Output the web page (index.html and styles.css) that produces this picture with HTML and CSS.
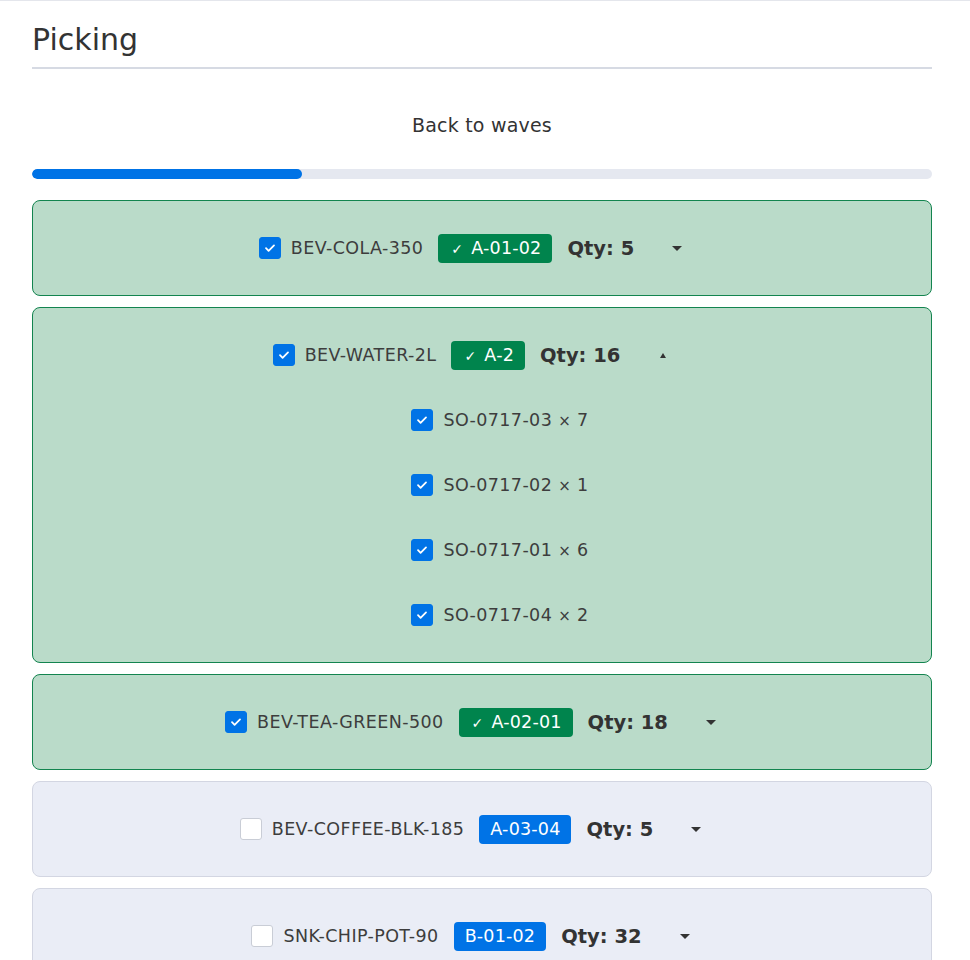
FILE: index.html
```html
<!DOCTYPE html>
<html lang="en">
<head>
  <meta charset="UTF-8">
  <meta name="viewport" content="width=device-width, initial-scale=1.0">
  <title>Picking</title>
  <link rel="stylesheet" href="styles.css">
</head>
<body>
  <div class="page">
    <h1 class="title">Picking</h1>

    <div class="back-link">
      <a href="#">Back to waves</a>
    </div>

    <div class="progress">
      <div class="progress-fill" style="width: 30%"></div>
    </div>

    <div class="pick-list">
      <div class="pick-card done">
        <div class="pick-row">
          <span class="check on"><svg viewBox="0 0 16 16"><path d="M4 8.2l2.6 2.6L12 5.4"/></svg></span>
          <span class="sku">BEV-COLA-350</span>
          <span class="loc ok"><span class="tick">✓</span>A-01-02</span>
          <span class="qty">Qty: 5</span>
          <span class="toggle"><span class="caret down"></span></span>
        </div>
      </div>

      <div class="pick-card done">
        <div class="pick-row">
          <span class="check on"><svg viewBox="0 0 16 16"><path d="M4 8.2l2.6 2.6L12 5.4"/></svg></span>
          <span class="sku">BEV-WATER-2L</span>
          <span class="loc ok"><span class="tick">✓</span>A-2</span>
          <span class="qty">Qty: 16</span>
          <span class="toggle"><span class="caret up"></span></span>
        </div>
        <div class="orders">
          <div class="order-row">
            <span class="check on"><svg viewBox="0 0 16 16"><path d="M4 8.2l2.6 2.6L12 5.4"/></svg></span>
            <span class="sku">SO-0717-03 <span class="times">×</span> 7</span>
          </div>
          <div class="order-row">
            <span class="check on"><svg viewBox="0 0 16 16"><path d="M4 8.2l2.6 2.6L12 5.4"/></svg></span>
            <span class="sku">SO-0717-02 <span class="times">×</span> 1</span>
          </div>
          <div class="order-row">
            <span class="check on"><svg viewBox="0 0 16 16"><path d="M4 8.2l2.6 2.6L12 5.4"/></svg></span>
            <span class="sku">SO-0717-01 <span class="times">×</span> 6</span>
          </div>
          <div class="order-row">
            <span class="check on"><svg viewBox="0 0 16 16"><path d="M4 8.2l2.6 2.6L12 5.4"/></svg></span>
            <span class="sku">SO-0717-04 <span class="times">×</span> 2</span>
          </div>
        </div>
      </div>

      <div class="pick-card done">
        <div class="pick-row">
          <span class="check on"><svg viewBox="0 0 16 16"><path d="M4 8.2l2.6 2.6L12 5.4"/></svg></span>
          <span class="sku">BEV-TEA-GREEN-500</span>
          <span class="loc ok"><span class="tick">✓</span>A-02-01</span>
          <span class="qty">Qty: 18</span>
          <span class="toggle"><span class="caret down"></span></span>
        </div>
      </div>

      <div class="pick-card">
        <div class="pick-row">
          <span class="check"></span>
          <span class="sku">BEV-COFFEE-BLK-185</span>
          <span class="loc">A-03-04</span>
          <span class="qty">Qty: 5</span>
          <span class="toggle"><span class="caret down"></span></span>
        </div>
      </div>

      <div class="pick-card">
        <div class="pick-row">
          <span class="check"></span>
          <span class="sku">SNK-CHIP-POT-90</span>
          <span class="loc">B-01-02</span>
          <span class="qty">Qty: 32</span>
          <span class="toggle"><span class="caret down"></span></span>
        </div>
      </div>
    </div>
  </div>
</body>
</html>
```

FILE: styles.css
```css
body {
  margin: 0;
  font-family: "DejaVu Sans", sans-serif;
  color: #333;
  background: #fff;
  border-top: 1px solid #e4e6ec;
}

.page {
  width: 900px;
  margin-left: 32px;
}

.title {
  margin: 0;
  padding-top: 20px;
  padding-bottom: 8px;
  font-size: 30px;
  font-weight: 400;
  line-height: 38px;
  color: #333;
  border-bottom: 2px solid #d6dae3;
}

.back-link {
  text-align: center;
  padding-top: 41px;
  height: 30px;
  line-height: 30px;
}

.back-link a {
  color: #333;
  text-decoration: none;
  font-size: 19px;
  letter-spacing: 0.2px;
}

.progress {
  margin-top: 29px;
  height: 10px;
  border-radius: 5px;
  background: #e5e8f0;
  overflow: hidden;
}

.progress-fill {
  height: 100%;
  background: #0073e6;
  border-radius: 5px;
}

.pick-list {
  margin-top: 21px;
  display: flex;
  flex-direction: column;
  gap: 11px;
}

.pick-card {
  background: #eaedf6;
  border: 1px solid #d3d6e2;
  border-radius: 8px;
  padding: 31px 0;
}

.pick-card.done {
  background: #badbc9;
  border-color: #13844f;
}

.pick-row,
.order-row {
  display: flex;
  align-items: center;
  justify-content: center;
  height: 32px;
}

.check {
  width: 20px;
  height: 20px;
  border: 1px solid #c9cdd6;
  border-radius: 3px;
  background: #fff;
  margin-right: 10px;
  display: flex;
  align-items: center;
  justify-content: center;
}

.check.on {
  background: #0073e6;
  border-color: #0073e6;
}

.check svg {
  width: 16px;
  height: 16px;
  fill: none;
  stroke: #fff;
  stroke-width: 1.8;
  stroke-linecap: round;
  stroke-linejoin: round;
}

.sku {
  font-size: 17.5px;
  letter-spacing: 0.4px;
  color: #3d3d3d;
}

.times {
  font-size: 15px;
}

.loc {
  margin-left: 15px;
  background: #0073e6;
  color: #fff;
  font-size: 17.5px;
  letter-spacing: 0.2px;
  height: 29px;
  line-height: 29px;
  padding: 0 11px;
  border-radius: 4px;
}

.loc.ok {
  background: #00844d;
}

.tick {
  font-size: 14px;
  margin: 0 8px 0 2px;
}

.qty {
  margin-left: 15px;
  font-size: 19.5px;
  font-weight: 700;
  color: #333;
}

.toggle {
  width: 56px;
  margin-left: 15px;
  display: flex;
  justify-content: center;
}

.caret.down {
  border-left: 5px solid transparent;
  border-right: 5px solid transparent;
  border-top: 5px solid #333;
}

.caret.up {
  border-left: 3px solid transparent;
  border-right: 3px solid transparent;
  border-bottom: 5px solid #333;
}

.orders {
  display: flex;
  flex-direction: column;
  gap: 33px;
  margin-top: 33px;
  padding-left: 36px;
}
```
